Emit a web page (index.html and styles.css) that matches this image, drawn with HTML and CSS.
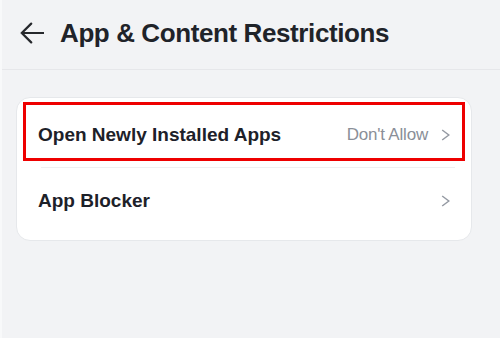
FILE: index.html
```html
<!DOCTYPE html>
<html>
<head>
<meta charset="utf-8">
<link rel="stylesheet" href="styles.css">
</head>
<body>
<div class="page">
  <header class="header">
    <svg class="back" width="24" height="22" viewBox="0 0 24 22" aria-hidden="true">
      <path d="M23.5 11 H1.8 M11.2 1.6 L1.8 11 L11.2 20.4" fill="none" stroke="#26282c" stroke-width="2.2" stroke-linecap="round" stroke-linejoin="miter"/>
    </svg>
    <h1 class="title">App &amp; Content Restrictions</h1>
  </header>
  <main class="content">
    <section class="card">
      <div class="row">
        <span class="label">Open Newly Installed Apps</span>
        <span class="value">Don't Allow</span>
        <svg class="chev" width="9" height="12" viewBox="0 0 9 12" aria-hidden="true">
          <path d="M1.2 1 L7.8 6 L1.2 11" fill="none" stroke="#959aa3" stroke-width="1.5"/>
        </svg>
        <span class="mark"></span>
      </div>
      <div class="divider"></div>
      <div class="row row-last">
        <span class="label">App Blocker</span>
        <svg class="chev" width="9" height="12" viewBox="0 0 9 12" aria-hidden="true">
          <path d="M1.2 1 L7.8 6 L1.2 11" fill="none" stroke="#959aa3" stroke-width="1.5"/>
        </svg>
      </div>
    </section>
  </main>
</div>
</body>
</html>
```

FILE: styles.css
```css
html, body {
  margin: 0;
  padding: 0;
}
body {
  background: #f2f3f5;
  font-family: "Liberation Sans", Arial, sans-serif;
  width: 500px;
  height: 338px;
  overflow: hidden;
}
.page {
  border-left: 2px solid #f8f9fa;
  height: 338px;
  box-sizing: border-box;
}
.header {
  height: 51px;
  border-bottom: 1px solid #e6e7ea;
  display: flex;
  align-items: flex-start;
  padding: 18px 0 0 18px;
}
.back {
  flex: none;
  margin-top: 4px;
}
.title {
  margin: 0 0 0 16px;
  font-size: 26px;
  line-height: 30px;
  font-weight: 700;
  letter-spacing: -0.4px;
  color: #1f2329;
}
.content {
  padding: 27px 28px 0 14px;
}
.card {
  background: #ffffff;
  border: 1px solid #e6e8eb;
  border-radius: 14px;
  padding: 4px 6px 6px;
}
.row {
  position: relative;
  display: flex;
  align-items: center;
  height: 65px;
  padding: 0 15px 0 15px;
}
.row-last {
  height: 66px;
}
.label {
  flex: 1;
  font-size: 19px;
  line-height: 22px;
  font-weight: 700;
  color: #1d2129;
}
.value {
  font-size: 17px;
  line-height: 20px;
  color: #8a8f98;
  margin-right: 13px;
  letter-spacing: -0.2px;
}
.chev {
  flex: none;
}
.mark {
  position: absolute;
  left: 0;
  right: 0;
  top: 0;
  height: 59px;
  border: 3px solid #ee0000;
  box-sizing: border-box;
}
.divider {
  height: 1px;
  background: #eeeff1;
  margin: 0 10px 0 18px;
}
```
